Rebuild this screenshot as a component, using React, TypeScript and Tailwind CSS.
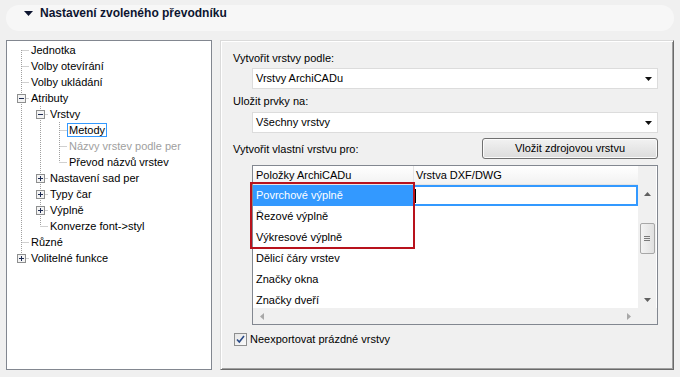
import React from 'react';

type TreeRow = {
  label: string;
  level: number;
  guides: boolean[];
  first?: boolean;
  last?: boolean;
  exp?: 'plus' | 'minus';
  selected?: boolean;
  disabled?: boolean;
};

const treeRows: TreeRow[] = [
  { label: 'Jednotka', level: 0, guides: [], first: true },
  { label: 'Volby otevírání', level: 0, guides: [] },
  { label: 'Volby ukládání', level: 0, guides: [] },
  { label: 'Atributy', level: 0, guides: [], exp: 'minus' },
  { label: 'Vrstvy', level: 1, guides: [true], exp: 'minus' },
  { label: 'Metody', level: 2, guides: [true, true], selected: true },
  { label: 'Názvy vrstev podle per', level: 2, guides: [true, true], disabled: true },
  { label: 'Převod názvů vrstev', level: 2, guides: [true, true], last: true },
  { label: 'Nastavení sad per', level: 1, guides: [true], exp: 'plus' },
  { label: 'Typy čar', level: 1, guides: [true], exp: 'plus' },
  { label: 'Výplně', level: 1, guides: [true], exp: 'plus' },
  { label: 'Konverze font->styl', level: 1, guides: [true], last: true },
  { label: 'Různé', level: 0, guides: [] },
  { label: 'Volitelné funkce', level: 0, guides: [], exp: 'plus', last: true },
];

const listItems = [
  'Povrchové výplně',
  'Řezové výplně',
  'Výkresové výplně',
  'Dělicí čáry vrstev',
  'Značky okna',
  'Značky dveří',
];

const dot = { stroke: '#a0a0a0', strokeDasharray: '1 1' };

const Guides: React.FC<{ row: TreeRow }> = ({ row }) => {
  const w = 22 + 19 * row.level;
  const x = 14.5 + 19 * row.level;
  return (
    <svg width={w} height={16} className="shrink-0">
      {row.guides.map((g, k) =>
        g ? <line key={k} x1={14.5 + 19 * k} y1={0} x2={14.5 + 19 * k} y2={16} {...dot} /> : null
      )}
      <line x1={x} y1={row.first ? 8 : 0} x2={x} y2={row.last ? 8 : 16} {...dot} />
      <line x1={x} y1={8.5} x2={w} y2={8.5} {...dot} />
      {row.exp && (
        <g>
          <rect x={x - 4} y={4.5} width={8} height={8} fill="#f3f3f3" stroke="#8e8f8f" />
          <line x1={x - 2.5} y1={8.5} x2={x + 2.5} y2={8.5} stroke="#1c2a52" />
          {row.exp === 'plus' && <line x1={x} y1={6} x2={x} y2={11} stroke="#1c2a52" />}
        </g>
      )}
    </svg>
  );
};

const Combo: React.FC<{ text: string }> = ({ text }) => (
  <div className="ml-[31px] mr-[15px] h-[21px] bg-white border border-[#dcdcdc] flex items-center pl-[3px] pr-[5px]">
    <span className="flex-1">{text}</span>
    <svg width="7" height="4"><path d="M0 0h7L3.5 4z" fill="#111" /></svg>
  </div>
);

export default function App() {
  return (
    <div className="w-[680px] h-[377px] bg-[#f0f0f0] overflow-hidden text-[11px] leading-[13px] text-black" style={{ fontFamily: '"Liberation Sans", Arial, sans-serif' }}>
      {/* header */}
      <div className="mt-[5px] ml-[6px] w-[668px] h-[26px] rounded-[13px] bg-[#f7f7f7] flex items-start pt-[1px]">
        <svg width="9" height="5" className="ml-[18px] mt-[5px]"><path d="M0 0h9L4.5 5z" fill="#0d1530" /></svg>
        <span className="ml-[7px] text-[12px] leading-[14px] font-bold text-[#0d1530]">Nastavení zvoleného převodníku</span>
      </div>

      <div className="mt-[9px] flex">
        {/* tree */}
        <div className="ml-[6px] w-[206px] h-[330px] bg-white border border-[#828790] pt-px">
          {treeRows.map((row) => (
            <div key={row.label} className="h-[16px] flex items-center">
              <Guides row={row} />
              <span
                className={`h-[14px] px-px border leading-[12px] whitespace-nowrap ${
                  row.selected ? 'border-[#3399ff]' : 'border-transparent'
                } ${row.disabled ? 'text-[#a0a0a0]' : 'text-black'}`}
              >
                {row.label}
              </span>
            </div>
          ))}
        </div>

        {/* settings panel */}
        <div className="ml-[8px] w-[454px] h-[330px] border-l border-t border-r border-b border-l-[#dadada] border-t-[#dadada] border-r-[#6a6a6a] border-b-[#6a6a6a] shadow-[inset_1px_1px_0_#ffffff,inset_-1px_-1px_0_#a0a0a0] flex flex-col">
          <div className="mt-[9px] ml-[12px] h-[16px] flex items-center">Vytvořit vrstvy podle:</div>
          <div className="mt-[2px]"><Combo text="Vrstvy ArchiCADu" /></div>
          <div className="mt-[4px] ml-[12px] h-[16px] flex items-center">Uložit prvky na:</div>
          <div className="mt-[3px]"><Combo text="Všechny vrstvy" /></div>

          <div className="mt-[5px] h-[21px] flex">
            <div className="ml-[12px] pt-[5px] flex-1">Vytvořit vlastní vrstvu pro:</div>
            <button className="mr-[15px] w-[176px] h-[21px] rounded-[3px] border border-[#707070] bg-gradient-to-b from-[#f2f2f2] to-[#dcdcdc] shadow-[inset_0_0_0_1px_#fbfbfb] text-[11px] leading-[13px]">
              Vložit zdrojovou vrstvu
            </button>
          </div>

          {/* table */}
          <div className="mt-[6px] ml-[31px] mr-[15px] h-[160px] border border-[#828790] bg-white flex flex-col relative">
            <div className="flex h-[142px]">
              <div className="w-[385px] flex flex-col overflow-hidden">
                <div className="h-[19px] flex shrink-0 bg-gradient-to-b from-white to-[#f2f2f2] border-b border-[#e5e5e5]">
                  <div className="w-[161px] pl-[3px] flex items-center border-r border-[#e5e5e5]">Položky ArchiCADu</div>
                  <div className="flex-1 pl-[2px] flex items-center">Vrstva DXF/DWG</div>
                </div>
                {listItems.map((item, i) => (
                  <div key={item} className="h-[21px] flex shrink-0">
                    <div className={`w-[161px] pl-[3px] flex items-center ${i === 0 ? 'bg-[#3399ff] text-white' : ''}`}>{item}</div>
                    <div className={`flex-1 flex items-center ${i === 0 ? 'border-2 border-[#3399ff] border-l-0' : ''}`}>
                      {i === 0 && <div className="w-px h-[14px] bg-black ml-[1px]" />}
                    </div>
                  </div>
                ))}
              </div>
              {/* vertical scrollbar */}
              <div className="w-[18px] bg-[#f0f0f0] flex flex-col items-center">
                <div className="h-[19px]" />
                <div className="h-[17px] flex items-center justify-center">
                  <svg width="7" height="4"><path d="M3.5 0L7 4H0z" fill="#606060" /></svg>
                </div>
                <div className="h-[21px]" />
                <div className="w-[15px] h-[31px] rounded-[2px] border border-[#a7a7a7] bg-gradient-to-r from-[#f3f3f3] to-[#e0e0e0] flex flex-col items-center justify-center gap-[1px]">
                  <div className="w-[6px] h-px bg-[#7a7a7a]" />
                  <div className="w-[6px] h-px bg-[#7a7a7a]" />
                  <div className="w-[6px] h-px bg-[#7a7a7a]" />
                </div>
                <div className="flex-1" />
                <div className="h-[17px] flex items-center justify-center">
                  <svg width="7" height="4"><path d="M0 0h7L3.5 4z" fill="#606060" /></svg>
                </div>
              </div>
            </div>
            {/* horizontal scrollbar */}
            <div className="flex-1 flex">
              <div className="w-[385px] bg-[#f0f0f0] flex items-center justify-between px-[7px]">
                <svg width="4" height="7"><path d="M0 3.5L4 0v7z" fill="#a8a8a8" /></svg>
                <svg width="4" height="7"><path d="M4 3.5L0 0v7z" fill="#a8a8a8" /></svg>
              </div>
              <div className="flex-1 bg-[#f0f0f0]" />
            </div>

            {/* highlight */}
            <div className="absolute left-[-3px] top-[16px] w-[165px] h-[67px] border-2 border-[#b8121c]" />
          </div>

          {/* checkbox */}
          <div className="mt-[8px] ml-[13px] flex items-center h-[13px]">
            <div className="w-[13px] h-[13px] border border-[#8e8f8f] bg-gradient-to-br from-[#e6e6e6] to-[#fafafa] flex items-center justify-center">
              <svg width="9" height="9" viewBox="0 0 9 9"><path d="M1 4.5l2.3 2.5L8 1" fill="none" stroke="#2a4a86" strokeWidth="1.6" /></svg>
            </div>
            <span className="ml-[3px]">Neexportovat prázdné vrstvy</span>
          </div>
        </div>
      </div>
    </div>
  );
}
